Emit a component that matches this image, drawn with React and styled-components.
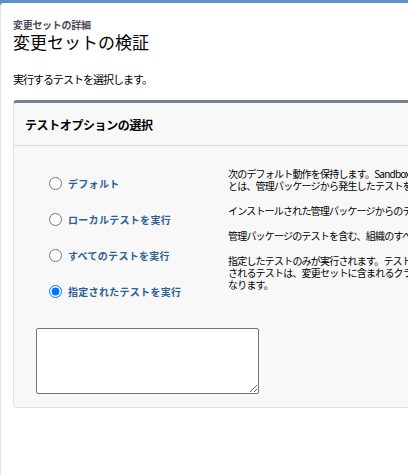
import React from "react"
import styled, { createGlobalStyle } from "styled-components"

const GlobalStyle = createGlobalStyle`
  html, body {
    margin: 0;
    padding: 0;
    background: #5f8fc8;
    font-family: "Noto Sans CJK JP", "Liberation Sans", sans-serif;
  }
`

const Page = styled.div`
  margin-top: 3px;
  min-height: 472px;
  box-sizing: border-box;
  background: #ffffff;
  border-left: 1px solid #e6e6e6;
  border-top-left-radius: 4px;
  padding: 15px 0 0 12px;
  overflow: hidden;
`

const SubTitle = styled.div`
  font-size: 10px;
  line-height: 13px;
  font-weight: 700;
  color: #4a4a56;
  letter-spacing: -0.3px;
`

const Title = styled.h1`
  margin: 0;
  font-size: 17px;
  line-height: 21px;
  font-weight: 400;
  color: #000;
`

const Intro = styled.p`
  margin: 20px 0 0;
  font-size: 11px;
  line-height: 14px;
  color: #000;
  letter-spacing: -1px;
`

const Box = styled.section`
  margin: 14px -12px 0 0;
  background: #f8f8f8;
  border: 1px solid #e2e2e2;
  border-top: 3px solid #747e96;
  border-radius: 4px 0 0 4px;
`

const BoxHeader = styled.h2`
  margin: 0;
  height: 43px;
  box-sizing: border-box;
  padding: 0 11px;
  display: flex;
  align-items: center;
  font-size: 12px;
  font-weight: 700;
  color: #000;
  letter-spacing: -0.4px;
  border-bottom: 1px solid #dbdbdb;
`

const BoxBody = styled.div`
  padding: 19px 0 13px 22px;
`

const Columns = styled.div`
  display: grid;
  grid-template-columns: 192px 1fr;
`

const OptionList = styled.div`
  display: flex;
  flex-direction: column;
  padding-left: 13px;
`

const OptionRow = styled.label`
  height: 36px;
  display: flex;
  align-items: center;
  gap: 6px;
`

const Radio = styled.input`
  margin: 0;
  width: 13px;
  height: 13px;
`

const OptionLabel = styled.span`
  font-size: 10px;
  font-weight: 700;
  color: #2f5f95;
  letter-spacing: 0.3px;
`

const HelpColumn = styled.div`
  padding-top: 3px;
  font-size: 10px;
  line-height: 12px;
  color: #000;
  white-space: nowrap;
`

const HelpText = styled.p`
  margin: 0 0 13px;
  letter-spacing: -0.8px;
`

const TestNames = styled.textarea`
  display: block;
  margin-top: 19px;
  width: 223px;
  height: 66px;
  box-sizing: border-box;
  border: 1px solid #767676;
  border-radius: 2px;
  background: #fff;
  font-family: inherit;
`

const options = [
  { id: "default", label: "デフォルト" },
  { id: "local", label: "ローカルテストを実行" },
  { id: "all", label: "すべてのテストを実行" },
  { id: "specified", label: "指定されたテストを実行", checked: true },
]

export default function App() {
  return (
    <>
      <GlobalStyle />
      <Page>
        <SubTitle>変更セットの詳細</SubTitle>
        <Title>変更セットの検証</Title>
        <Intro>実行するテストを選択します。</Intro>
        <Box>
          <BoxHeader>テストオプションの選択</BoxHeader>
          <BoxBody>
            <Columns>
              <OptionList>
                {options.map((o) => (
                  <OptionRow key={o.id}>
                    <Radio type="radio" name="testLevel" defaultChecked={o.checked} />
                    <OptionLabel>{o.label}</OptionLabel>
                  </OptionRow>
                ))}
              </OptionList>
              <HelpColumn>
                <HelpText>
                  次のデフォルト動作を保持します。Sandbox 組織では、テストは実行されません。本番組織では、ローカルテスト
                  <br />
                  とは、管理パッケージから発生したテストを除く、組織内のすべてのテストです。
                </HelpText>
                <HelpText>
                  インストールされた管理パッケージからのテストを除く、組織内のすべてのテストが実行されます。
                </HelpText>
                <HelpText>
                  管理パッケージのテストを含む、組織のすべてのテストが実行されます。
                </HelpText>
                <HelpText>
                  指定したテストのみが実行されます。テストクラス名をカンマ区切りで入力してください。実行
                  <br />
                  されるテストは、変更セットに含まれるクラスとトリガのコードカバー率を満たす必要が
                  <br />
                  なります。
                </HelpText>
              </HelpColumn>
            </Columns>
            <TestNames />
          </BoxBody>
        </Box>
      </Page>
    </>
  )
}
